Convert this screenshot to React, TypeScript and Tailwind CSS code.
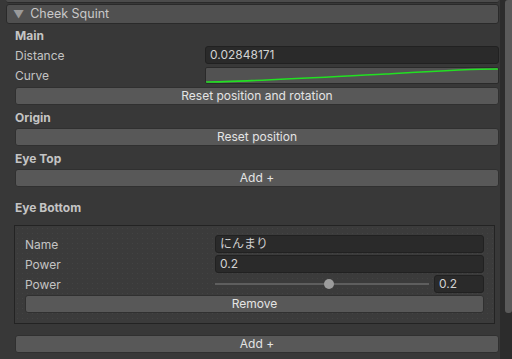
import React from "react";

const font = "font-['Inter','Noto_Sans_CJK_JP',sans-serif]";

const Label = ({ children, bold }: { children: React.ReactNode; bold?: boolean }) => (
  <div className={`w-[190px] shrink-0 pt-[2px] text-[12px] text-[#c4c4c4] ${bold ? "font-bold" : ""}`}>{children}</div>
);

const Field = ({ value }: { value: string }) => (
  <div className="flex-1 h-[18px] flex items-center px-[4px] bg-[#2a2a2a] border border-[#212121] rounded-[3px] text-[12px] text-[#d2d2d2] leading-none">
    {value}
  </div>
);

const Btn = ({ children, className = "" }: { children: React.ReactNode; className?: string }) => (
  <div
    className={`h-[18px] flex items-center justify-center bg-[#585858] border border-[#303030] rounded-[3px] text-[12px] text-[#e4e4e4] leading-none ${className}`}
  >
    {children}
  </div>
);

const Section = ({ title, className = "" }: { title: string; className?: string }) => (
  <div className={`h-[18px] flex items-center ${className}`}>
    <Label bold>{title}</Label>
  </div>
);

const CurveField = () => (
  <div className="flex-1 h-[17px] bg-[#525252] border border-[#2a2a2a] rounded-[2px] overflow-hidden">
    <svg width="100%" height="100%" viewBox="0 0 292 15" preserveAspectRatio="none">
      <path d="M0,14 C30,14 100,10 180,6 C230,3 260,1 292,1" fill="none" stroke="#22e022" strokeWidth="1.6" />
    </svg>
  </div>
);

const Slider = () => (
  <div className="flex-1 flex items-center gap-[5px]">
    <div className="relative flex-1 h-[18px] flex items-center">
      <div className="w-full h-[2px] bg-[#5e5e5e]" />
      <div className="absolute left-[109px] top-[4px] w-[10px] h-[10px] rounded-full bg-[#9c9c9c]" />
    </div>
    <div className="w-[50px] h-[18px] flex items-center px-[4px] bg-[#2a2a2a] border border-[#212121] rounded-[3px] text-[12px] text-[#d2d2d2] leading-none">
      0.2
    </div>
  </div>
);

export default function App() {
  return (
    <div className={`w-[512px] h-[359px] flex bg-[#383838] overflow-hidden ${font}`}>
      <div className="flex-1 flex flex-col pl-[15px] pr-px">
        <div className="h-[3px] -ml-[9px] bg-[#4b4b4b] border-b border-[#2a2a2a] rounded-b-[3px]" />
        <div className="mt-[1px] -ml-[9px] h-[20px] flex items-center gap-[6px] pl-[6px] bg-[#505050] border border-[#2a2a2a] rounded-[3px]">
          <span className="text-[11px] text-[#9a9a9a] leading-none">▼</span>
          <span className="text-[12.5px] text-[#c8c8c8] leading-none">Cheek Squint</span>
        </div>

        <Section title="Main" className="mt-[2px]" />
        <div className="mt-[2px] h-[18px] flex items-center">
          <Label>Distance</Label>
          <Field value="0.02848171" />
        </div>
        <div className="mt-[2px] h-[18px] flex items-center">
          <Label>Curve</Label>
          <CurveField />
        </div>
        <Btn className="mt-[3px]">Reset position and rotation</Btn>

        <Section title="Origin" className="mt-[3px]" />
        <Btn className="mt-[2px]">Reset position</Btn>

        <Section title="Eye Top" className="mt-[3px]" />
        <Btn className="mt-[2px]">Add +</Btn>

        <Section title="Eye Bottom" className="mt-[11px]" />
        <div className="mt-[9px] -ml-px mr-[4px] flex flex-col gap-[2px] pt-[9px] pb-[10px] px-[10px] bg-[#3b3b3b] bg-[radial-gradient(circle,#434343_0.6px,transparent_0.8px)] bg-[length:5px_5px] border border-[#232323]">
          <div className="h-[18px] flex items-center">
            <Label>Name</Label>
            <Field value="にんまり" />
          </div>
          <div className="h-[18px] flex items-center">
            <Label>Power</Label>
            <Field value="0.2" />
          </div>
          <div className="h-[18px] flex items-center">
            <Label>Power</Label>
            <Slider />
          </div>
          <Btn>Remove</Btn>
        </div>
        <Btn className="mt-[11px]">Add +</Btn>
      </div>
      <div className="w-[12px] shrink-0 flex bg-[#2c2c2c] pl-[5px]">
        <div className="w-full h-[313px] bg-[#5a5a5a] rounded-l-[3px] rounded-b-[3px]" />
      </div>
    </div>
  );
}
